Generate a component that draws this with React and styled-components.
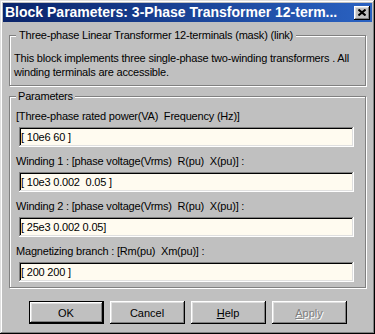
import React from "react";
import styled, { createGlobalStyle } from "styled-components";

const GlobalStyle = createGlobalStyle`
  html, body {
    margin: 0;
    padding: 0;
    background: #c0c0c0;
  }
  body {
    font-family: "Liberation Sans", Arial, sans-serif;
  }
`;

const Window = styled.div`
  width: 375px;
  height: 334px;
  box-sizing: border-box;
  padding: 3px;
  display: flex;
  flex-direction: column;
  background: #c0c0c0;
  box-shadow: inset -1px -1px #000, inset 1px 1px #dfdfdf,
    inset -2px -2px #808080, inset 2px 2px #fff;
  font-family: "Liberation Sans", Arial, sans-serif;
  font-size: 11px;
  letter-spacing: -0.2px;
  color: #000;
`;

const TitleBar = styled.div`
  height: 19px;
  display: flex;
  align-items: center;
  padding: 0 2px 0 2px;
  background: linear-gradient(to right, #0a246a, #2a62c2);
  color: #fff;
  font-size: 14px;
  font-weight: bold;
  letter-spacing: 0;
`;

const TitleText = styled.span`
  flex: 1;
  line-height: 19px;
  white-space: nowrap;
  overflow: hidden;
`;

const CloseButton = styled.button`
  width: 16px;
  height: 14px;
  padding: 0;
  border: 0;
  display: flex;
  align-items: center;
  justify-content: center;
  background: #c0c0c0;
  box-shadow: inset -1px -1px #000, inset 1px 1px #fff,
    inset -2px -2px #808080, inset 2px 2px #dfdfdf;
`;

const Group = styled.fieldset`
  margin: ${(p) => p.$top}px 6px 0 6px;
  padding: ${(p) => p.$pad};
  min-width: 0;
  border: 1px solid #808080;
  box-shadow: inset 1px 1px #fff, 1px 1px #fff;
`;

const Legend = styled.legend`
  margin-left: ${(p) => p.$offset}px;
  padding: 0 ${(p) => p.$space}px;
  line-height: 13px;
  background: #c0c0c0;
  white-space: nowrap;
`;

const Description = styled.div`
  line-height: 14px;
`;

const Field = styled.div`
  & + & {
    margin-top: 8px;
  }
`;

const FieldLabel = styled.label`
  display: block;
  line-height: 13px;
  white-space: pre;
`;

const FieldInput = styled.input`
  display: block;
  box-sizing: border-box;
  width: calc(100% - 8px);
  height: 20px;
  margin: 4px 5px 0 3px;
  padding: 0 2px;
  border: 0;
  outline: none;
  background: #fffbf0;
  font: inherit;
  letter-spacing: inherit;
  color: #000;
  box-shadow: inset -1px -1px #fff, inset 1px 1px #808080,
    inset -2px -2px #dfdfdf, inset 2px 2px #000;
`;

const ButtonRow = styled.div`
  display: flex;
  justify-content: center;
  gap: 6px;
  margin-top: 13px;
`;

const Button = styled.button`
  width: 75px;
  height: 23px;
  box-sizing: border-box;
  padding: 0;
  border: ${(p) => (p.$default ? "1px solid #000" : "0")};
  background: #c0c0c0;
  font: inherit;
  letter-spacing: 0;
  color: ${(p) => (p.disabled ? "#808080" : "#000")};
  text-shadow: ${(p) => (p.disabled ? "1px 1px #fff" : "none")};
  box-shadow: inset -1px -1px #000, inset 1px 1px #fff,
    inset -2px -2px #808080, inset 2px 2px #dfdfdf;
`;

const fields = [
  { label: "[Three-phase rated power(VA)  Frequency (Hz)]", value: "[ 10e6 60 ]" },
  { label: "Winding 1 : [phase voltage(Vrms)  R(pu)  X(pu)] :", value: "[ 10e3 0.002  0.05 ]" },
  { label: "Winding 2 : [phase voltage(Vrms)  R(pu)  X(pu)] :", value: "[ 25e3 0.002 0.05]" },
  { label: "Magnetizing branch : [Rm(pu)  Xm(pu)] :", value: "[ 200 200 ]" },
];

export default function App() {
  return (
    <>
      <GlobalStyle />
      <Window>
        <TitleBar>
          <TitleText>Block Parameters: 3-Phase Transformer 12-term...</TitleText>
          <CloseButton aria-label="Close">
            <svg width="8" height="7" viewBox="0 0 8 7">
              <path d="M0.5 0.5 L7.5 6.5 M7.5 0.5 L0.5 6.5" stroke="#000" strokeWidth="2" />
            </svg>
          </CloseButton>
        </TitleBar>

        <Group $top={7} $pad="9px 6px 6px 4px">
          <Legend $offset={2} $space={3}>
            Three-phase Linear Transformer 12-terminals (mask) (link)
          </Legend>
          <Description>
            This block implements three single-phase two-winding transformers . All
            winding terminals are accessible.
          </Description>
        </Group>

        <Group $top={4} $pad="7px 6px 5px 6px">
          <Legend $offset={0} $space={2}>
            Parameters
          </Legend>
          {fields.map((f) => (
            <Field key={f.label}>
              <FieldLabel>{f.label}</FieldLabel>
              <FieldInput defaultValue={f.value} />
            </Field>
          ))}
        </Group>

        <ButtonRow>
          <Button $default>OK</Button>
          <Button>Cancel</Button>
          <Button>
            <u>H</u>elp
          </Button>
          <Button disabled>
            <u>A</u>pply
          </Button>
        </ButtonRow>
      </Window>
    </>
  );
}
